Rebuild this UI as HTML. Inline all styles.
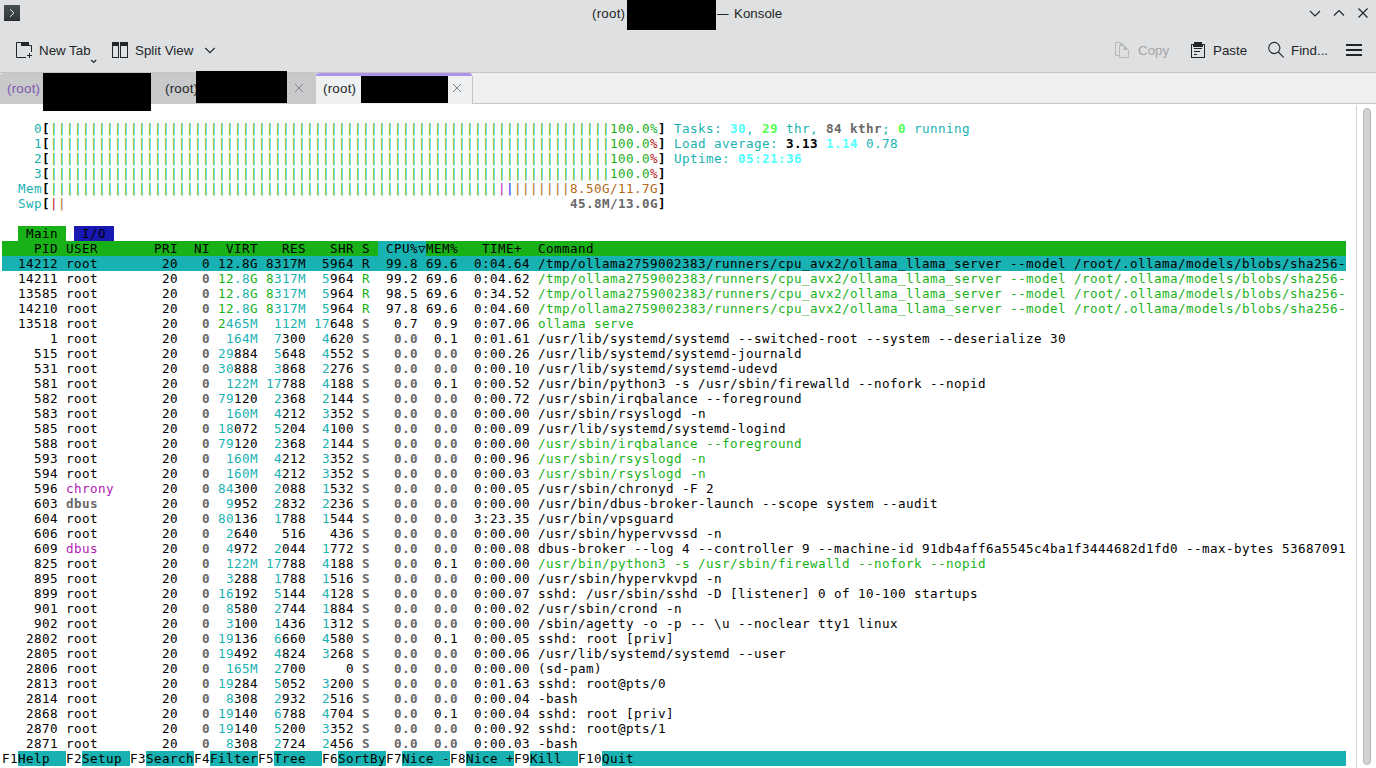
<!DOCTYPE html>
<html lang="en">
<head>
<meta charset="utf-8">
<title>(root) — Konsole</title>
<style>
html,body{margin:0;padding:0;}
body{width:1376px;height:768px;overflow:hidden;background:#fff;position:relative;
  font-family:"Liberation Sans","DejaVu Sans",sans-serif;font-size:13.33px;color:#232629;}
.abs{position:absolute;}
/* window chrome */
#head{left:0;top:0;width:1376px;height:72px;background:#dee0e2;}
#title{left:0;top:0;width:1376px;height:27px;}
.ui{position:absolute;white-space:pre;line-height:16px;height:16px;}
.rt{letter-spacing:0.24px;}
.red{position:absolute;background:#000;}
#tabs{left:0;top:72px;width:1376px;height:32px;background:#eff0f1;}
#tabs .line{left:0;top:0;width:1376px;height:1px;background:#c2c4c6;}
#tabs .bline{left:0;top:31px;width:1376px;height:1px;background:#c5c7c9;}
.tab{position:absolute;top:1px;height:31px;background:#c8c9cb;}
.tab.act{background:#eff0f1;height:31px;}
/* terminal */
#term{left:2px;top:106px;width:1344px;height:660px;
  font-family:"DejaVu Sans Mono","Liberation Mono",monospace;font-size:12.6px;color:#000;}
#term .bg{position:absolute;height:15px;}
#term .txt{position:absolute;left:0;top:0;}
.ln{position:relative;height:15px;line-height:15px;white-space:pre;letter-spacing:0.4178px;}
.ln span{position:absolute;top:0;}
.c{color:#18b2b2}.g{color:#18b218}.r{color:#b21818}.y{color:#b26818}.m{color:#b218b2}
.B{color:#5454ff;font-weight:bold}
.s{color:#686868;font-weight:bold}.K{color:#000;font-weight:bold}
.C{color:#54ffff;font-weight:bold}.G{color:#54ff54;font-weight:bold}
/* scrollbar */
#sbline{left:1356px;top:105px;width:1px;height:663px;background:#d3d4d5;}
#sbh{left:1363px;top:108px;width:6px;height:655px;border:1px solid #b6b7b8;background:#d1d2d3;border-radius:4px;}
</style>
</head>
<body>
<div id="head" class="abs">
  <!-- konsole app icon -->
  <svg class="abs" style="left:4px;top:5px" width="16" height="16" viewBox="0 0 16 16">
    <defs><linearGradient id="kg" x1="0" y1="0" x2="0" y2="1"><stop offset="0" stop-color="#464e50"/><stop offset="1" stop-color="#30373a"/></linearGradient></defs>
    <rect x="0" y="0" width="16" height="16" rx="0.6" fill="url(#kg)"/><rect x="0" y="15" width="16" height="1" fill="#252a2d"/>
    <path d="M6 4.2 L9.9 8 L6 11.8" fill="none" stroke="#eef0f0" stroke-width="1"/>
  </svg>
  <div class="ui rt" id="t1" style="left:592px;top:6px;">(root)</div>
  <div class="red" style="left:627px;top:0;width:89px;height:30px;"></div>
  <div class="ui" id="t2" style="left:717px;top:6px;"><span style="display:inline-block;width:17px;"><span style="display:inline-block;transform:scaleX(0.86);transform-origin:0 50%;">—</span></span>Konsole</div>
  <!-- window buttons -->
  <svg class="abs" style="left:1304px;top:4px" width="68" height="18" viewBox="0 0 68 18">
    <g fill="none" stroke="#232629" stroke-width="1.15">
      <path d="M6 7 L11 12 L16 7"/>
      <path d="M30 11.5 L35 6.5 L40 11.5"/>
      <path d="M54.5 4.5 L63.5 13.5 M63.5 4.5 L54.5 13.5"/>
    </g>
  </svg>
  <!-- toolbar: New Tab -->
  <svg class="abs" style="left:16px;top:42px" width="16" height="16" viewBox="0 0 16 16">
    <path d="M5 0.5 H0.5 V15.5 H10 M13 3.5 H15.5 V10" fill="none" stroke="#232629" stroke-width="1" stroke-linejoin="miter"/>
    <rect x="5" y="0" width="8" height="4" fill="#232629"/>
    <path d="M13.5 11 V16 M11 13.5 H16" fill="none" stroke="#232629" stroke-width="1"/>
  </svg>
  <div class="ui" id="b1" style="left:39px;top:43px;">New Tab</div>
  <svg class="abs" style="left:90px;top:59px" width="8" height="5" viewBox="0 0 8 5"><path d="M1.2 1 L3.7 3.5 L6.2 1" fill="none" stroke="#232629" stroke-width="1.2"/></svg>
  <!-- Split View -->
  <svg class="abs" style="left:112px;top:42px" width="16" height="16" viewBox="0 0 16 16">
    <rect x="0" y="0" width="7" height="4" fill="#232629"/><rect x="8" y="0" width="8" height="4" fill="#232629"/>
    <rect x="0.5" y="0.5" width="6" height="15" fill="none" stroke="#232629"/>
    <rect x="8.5" y="0.5" width="7" height="15" fill="none" stroke="#232629"/>
  </svg>
  <div class="ui" id="b2" style="left:135px;top:43px;">Split View</div>
  <svg class="abs" style="left:204px;top:46px" width="12" height="9" viewBox="0 0 12 9"><path d="M1.3 2 L6 6.7 L10.7 2" fill="none" stroke="#232629" stroke-width="1.1"/></svg>
  <!-- Copy (disabled) -->
  <svg class="abs" style="left:1115px;top:42px" width="14" height="16" viewBox="0 0 14 16">
    <g fill="none" stroke="#b5b7b9" stroke-width="1">
      <path d="M4.5 13.5 H0.5 V0.5 H5.5"/>
      <path d="M9 3.5 H4.5 V15.5 H13.5 V8"/>
    </g>
    <path d="M5.3 0 L9 3.7 L9 3 H5.3 Z M8.7 3 L14 8.3 V8 H8.7 Z" fill="#b5b7b9"/>
    <path d="M5.5 0 L8.8 3.3 H5.5 Z" fill="#b5b7b9"/>
    <path d="M9 3.2 L13.8 8 H9 Z" fill="#b5b7b9"/>
  </svg>
  <div class="ui" id="b3" style="left:1138px;top:43px;color:#a3a5a7;">Copy</div>
  <!-- Paste -->
  <svg class="abs" style="left:1191px;top:42px" width="14" height="16" viewBox="0 0 14 16">
    <rect x="0.5" y="2.5" width="13" height="13" fill="none" stroke="#232629"/>
    <rect x="3" y="0" width="8" height="3" fill="#232629"/><rect x="2" y="2" width="10" height="3" fill="#232629"/>
    <path d="M3 6.5 H11 M3 9.5 H9 M3 12.5 H6" stroke="#232629" stroke-width="1" fill="none"/>
  </svg>
  <div class="ui" id="b4" style="left:1213px;top:43px;">Paste</div>
  <!-- Find -->
  <svg class="abs" style="left:1267px;top:41px" width="18" height="18" viewBox="0 0 18 18">
    <circle cx="7.3" cy="7" r="5.6" fill="none" stroke="#232629" stroke-width="1.1"/>
    <path d="M11.3 11 L16.6 16.4" stroke="#232629" stroke-width="1.1" fill="none"/>
  </svg>
  <div class="ui" id="b5" style="left:1291px;top:43px;">Find...</div>
  <!-- hamburger -->
  <div class="abs" style="left:1346px;top:44px;width:16px;height:2px;background:#232629"></div>
  <div class="abs" style="left:1346px;top:49px;width:16px;height:2px;background:#232629"></div>
  <div class="abs" style="left:1346px;top:54px;width:16px;height:2px;background:#232629"></div>
</div>
<div id="tabs" class="abs">
  <div class="abs line"></div><div class="abs bline"></div>
  <div class="tab" style="left:0;width:151px;"><div class="ui rt" id="g1" style="left:7px;top:8px;color:#7f55b0;">(root)</div></div>
  <div class="tab" style="left:151px;width:165px;"><div class="ui rt" id="g2" style="left:14px;top:8px;">(root)</div>
    <svg class="abs" style="left:143px;top:10px" width="10" height="10" viewBox="0 0 10 10"><path d="M1 1 L9 9 M9 1 L1 9" stroke="#7e8183" stroke-width="0.95" fill="none"/></svg></div>
  <div class="tab act" style="left:316px;width:156px;"><div class="abs" style="left:0;top:0;width:156px;height:6px;overflow:hidden"><div style="width:156px;height:12px;border-radius:3px;background:#ad94e8"></div></div>
    <div class="abs" style="left:0;top:3px;width:156px;height:28px;background:#eff0f1"></div>
    <div class="ui rt" id="g3" style="left:7px;top:8px;">(root)</div>
    <svg class="abs" style="left:136px;top:10px" width="10" height="10" viewBox="0 0 10 10"><path d="M1 1 L9 9 M9 1 L1 9" stroke="#75787a" stroke-width="0.95" fill="none"/></svg></div>
  <div class="abs" style="left:472px;top:4px;width:1px;height:27px;background:#c3c5c6"></div>
  <svg class="abs" style="left:0;top:0" width="4" height="4" viewBox="0 0 4 4"><path d="M0 1 L3.2 1 L0 2.6 Z" fill="#eceded"/></svg>
</div>
<div class="red" style="left:43px;top:73px;width:108px;height:38px;"></div>
<div class="red" style="left:196px;top:71px;width:91px;height:32px;"></div>
<div class="red" style="left:361px;top:76px;width:87px;height:27px;"></div>
<div id="term" class="abs">
<div class="bg" style="left:0px;top:135px;width:1344px;background:#18b218"></div>
<div class="bg" style="left:0px;top:150px;width:1344px;background:#18b2b2"></div>
<div class="bg" style="left:600px;top:645px;width:744px;background:#18b2b2"></div>
<div class="bg" style="left:16px;top:120px;width:48px;background:#18b218"></div>
<div class="bg" style="left:376px;top:135px;width:48px;background:#18b2b2"></div>
<div class="bg" style="left:16px;top:645px;width:48px;background:#18b2b2"></div>
<div class="bg" style="left:80px;top:645px;width:48px;background:#18b2b2"></div>
<div class="bg" style="left:144px;top:645px;width:48px;background:#18b2b2"></div>
<div class="bg" style="left:208px;top:645px;width:48px;background:#18b2b2"></div>
<div class="bg" style="left:272px;top:645px;width:48px;background:#18b2b2"></div>
<div class="bg" style="left:336px;top:645px;width:48px;background:#18b2b2"></div>
<div class="bg" style="left:400px;top:645px;width:48px;background:#18b2b2"></div>
<div class="bg" style="left:464px;top:645px;width:48px;background:#18b2b2"></div>
<div class="bg" style="left:528px;top:645px;width:48px;background:#18b2b2"></div>
<div class="bg" style="left:72px;top:120px;width:40px;background:#1818b2"></div>
<div class="txt">
<div class="ln"></div>
<div class="ln"><span class="c" style="left:32px">0</span><span class="K" style="left:40px">[</span><span class="g" style="left:48px">||||||||||</span><span class="g" style="left:128px">||||||||||</span><span class="g" style="left:208px">||||||||||</span><span class="g" style="left:288px">||||||||||</span><span class="g" style="left:368px">||||||||||</span><span class="g" style="left:448px">||||||||||</span><span class="g" style="left:528px">||||||||||</span><span class="g" style="left:608px">100.0%</span><span class="K" style="left:656px">] </span><span class="c" style="left:672px">Tasks: </span><span class="C" style="left:728px">30</span><span class="c" style="left:744px">, </span><span class="G" style="left:760px">29 </span><span class="c" style="left:784px">thr, </span><span class="s" style="left:824px">84 </span><span class="s" style="left:848px">kthr</span><span class="c" style="left:880px">; </span><span class="G" style="left:896px">0 </span><span class="c" style="left:912px">running</span></div>
<div class="ln"><span class="c" style="left:32px">1</span><span class="K" style="left:40px">[</span><span class="g" style="left:48px">||||||||||</span><span class="g" style="left:128px">||||||||||</span><span class="g" style="left:208px">||||||||||</span><span class="g" style="left:288px">||||||||||</span><span class="g" style="left:368px">||||||||||</span><span class="g" style="left:448px">||||||||||</span><span class="g" style="left:528px">||||||||||</span><span class="g" style="left:608px">100.0</span><span class="r" style="left:648px">%</span><span class="K" style="left:656px">] </span><span class="c" style="left:672px">Load </span><span class="c" style="left:712px">average: </span><span class="K" style="left:784px">3.13 </span><span class="C" style="left:824px">1.14 </span><span class="c" style="left:864px">0.78</span></div>
<div class="ln"><span class="c" style="left:32px">2</span><span class="K" style="left:40px">[</span><span class="g" style="left:48px">||||||||||</span><span class="g" style="left:128px">||||||||||</span><span class="g" style="left:208px">||||||||||</span><span class="g" style="left:288px">||||||||||</span><span class="g" style="left:368px">||||||||||</span><span class="g" style="left:448px">||||||||||</span><span class="g" style="left:528px">||||||||||</span><span class="g" style="left:608px">100.0</span><span class="r" style="left:648px">%</span><span class="K" style="left:656px">] </span><span class="c" style="left:672px">Uptime: </span><span class="C" style="left:736px">05:21:36</span></div>
<div class="ln"><span class="c" style="left:32px">3</span><span class="K" style="left:40px">[</span><span class="g" style="left:48px">||||||||||</span><span class="g" style="left:128px">||||||||||</span><span class="g" style="left:208px">||||||||||</span><span class="g" style="left:288px">||||||||||</span><span class="g" style="left:368px">||||||||||</span><span class="g" style="left:448px">||||||||||</span><span class="g" style="left:528px">||||||||||</span><span class="g" style="left:608px">100.0</span><span class="r" style="left:648px">%</span><span class="K" style="left:656px">]</span></div>
<div class="ln"><span class="c" style="left:16px">Mem</span><span class="K" style="left:40px">[</span><span class="g" style="left:48px">||||||||||</span><span class="g" style="left:128px">||||||||||</span><span class="g" style="left:208px">||||||||||</span><span class="g" style="left:288px">||||||||||</span><span class="g" style="left:368px">||||||||||</span><span class="g" style="left:448px">||||||</span><span class="m" style="left:496px">|</span><span class="B" style="left:504px">|</span><span class="y" style="left:512px">|||||||</span><span class="y" style="left:568px">8.50G/11.7G</span><span class="K" style="left:656px">]</span></div>
<div class="ln"><span class="c" style="left:16px">Swp</span><span class="K" style="left:40px">[</span><span class="r" style="left:48px">|</span><span class="y" style="left:56px">|                                                               </span><span class="s" style="left:568px">45.8M/13.0G</span><span class="K" style="left:656px">]</span></div>
<div class="ln"></div>
<div class="ln"><span style="left:24px">Main   </span><span style="left:80px">I/O</span></div>
<div class="ln"><span style="left:32px">PID </span><span style="left:64px">USER       </span><span style="left:152px">PRI  </span><span style="left:192px">NI  </span><span style="left:224px">VIRT   </span><span style="left:280px">RES   </span><span style="left:328px">SHR </span><span style="left:360px">S  </span><span style="left:384px">CPU%▽MEM%   </span><span style="left:480px">TIME+  </span><span style="left:536px">Command</span></div>
<div class="ln"><span style="left:16px">14212 </span><span style="left:64px">root        </span><span style="left:160px">20   </span><span style="left:200px">0 </span><span style="left:216px">12.8G </span><span style="left:264px">8317M  </span><span style="left:320px">5964 </span><span style="left:360px">R  </span><span style="left:384px">99.8 </span><span style="left:424px">69.6  </span><span style="left:472px">0:04.64 </span><span style="left:536px">/tmp/ollama2759002383/runners/cpu_avx2/ollama_llama_server </span><span style="left:1008px">--model </span><span style="left:1072px">/root/.ollama/models/blobs/sha256-</span></div>
<div class="ln"><span style="left:16px">14211 </span><span style="left:64px">root        </span><span style="left:160px">20   </span><span class="s" style="left:200px">0 </span><span class="g" style="left:216px">12</span><span class="c" style="left:232px">.8</span><span class="g" style="left:248px">G </span><span class="g" style="left:264px">8</span><span class="c" style="left:272px">317M  </span><span class="c" style="left:320px">5</span><span style="left:328px">964 </span><span class="g" style="left:360px">R  </span><span style="left:384px">99.2 </span><span style="left:424px">69.6  </span><span style="left:472px">0:04.62 </span><span class="g" style="left:536px">/tmp/ollama2759002383/runners/cpu_avx2/ollama_llama_server </span><span class="g" style="left:1008px">--model </span><span class="g" style="left:1072px">/root/.ollama/models/blobs/sha256-</span></div>
<div class="ln"><span style="left:16px">13585 </span><span style="left:64px">root        </span><span style="left:160px">20   </span><span class="s" style="left:200px">0 </span><span class="g" style="left:216px">12</span><span class="c" style="left:232px">.8</span><span class="g" style="left:248px">G </span><span class="g" style="left:264px">8</span><span class="c" style="left:272px">317M  </span><span class="c" style="left:320px">5</span><span style="left:328px">964 </span><span class="g" style="left:360px">R  </span><span style="left:384px">98.5 </span><span style="left:424px">69.6  </span><span style="left:472px">0:34.52 </span><span class="g" style="left:536px">/tmp/ollama2759002383/runners/cpu_avx2/ollama_llama_server </span><span class="g" style="left:1008px">--model </span><span class="g" style="left:1072px">/root/.ollama/models/blobs/sha256-</span></div>
<div class="ln"><span style="left:16px">14210 </span><span style="left:64px">root        </span><span style="left:160px">20   </span><span class="s" style="left:200px">0 </span><span class="g" style="left:216px">12</span><span class="c" style="left:232px">.8</span><span class="g" style="left:248px">G </span><span class="g" style="left:264px">8</span><span class="c" style="left:272px">317M  </span><span class="c" style="left:320px">5</span><span style="left:328px">964 </span><span class="g" style="left:360px">R  </span><span style="left:384px">97.8 </span><span style="left:424px">69.6  </span><span style="left:472px">0:04.60 </span><span class="g" style="left:536px">/tmp/ollama2759002383/runners/cpu_avx2/ollama_llama_server </span><span class="g" style="left:1008px">--model </span><span class="g" style="left:1072px">/root/.ollama/models/blobs/sha256-</span></div>
<div class="ln"><span style="left:16px">13518 </span><span style="left:64px">root        </span><span style="left:160px">20   </span><span class="s" style="left:200px">0 </span><span class="g" style="left:216px">2</span><span class="c" style="left:224px">465M  </span><span class="c" style="left:272px">112M </span><span class="c" style="left:312px">17</span><span style="left:328px">648 </span><span class="s" style="left:360px">S   </span><span style="left:392px">0.7  </span><span style="left:432px">0.9  </span><span style="left:472px">0:07.06 </span><span class="g" style="left:536px">ollama </span><span class="g" style="left:592px">serve</span></div>
<div class="ln"><span style="left:48px">1 </span><span style="left:64px">root        </span><span style="left:160px">20   </span><span class="s" style="left:200px">0  </span><span class="c" style="left:224px">164M  </span><span class="c" style="left:272px">7</span><span style="left:280px">300  </span><span class="c" style="left:320px">4</span><span style="left:328px">620 </span><span class="s" style="left:360px">S   </span><span class="s" style="left:392px">0.0  </span><span style="left:432px">0.1  </span><span style="left:472px">0:01.61 </span><span style="left:536px">/usr/lib/systemd/systemd </span><span style="left:736px">--switched-root </span><span style="left:864px">--system </span><span style="left:936px">--deserialize </span><span style="left:1048px">30</span></div>
<div class="ln"><span style="left:32px">515 </span><span style="left:64px">root        </span><span style="left:160px">20   </span><span class="s" style="left:200px">0 </span><span class="c" style="left:216px">29</span><span style="left:232px">884  </span><span class="c" style="left:272px">5</span><span style="left:280px">648  </span><span class="c" style="left:320px">4</span><span style="left:328px">552 </span><span class="s" style="left:360px">S   </span><span class="s" style="left:392px">0.0  </span><span class="s" style="left:432px">0.0  </span><span style="left:472px">0:00.26 </span><span style="left:536px">/usr/lib/systemd/systemd-journald</span></div>
<div class="ln"><span style="left:32px">531 </span><span style="left:64px">root        </span><span style="left:160px">20   </span><span class="s" style="left:200px">0 </span><span class="c" style="left:216px">30</span><span style="left:232px">888  </span><span class="c" style="left:272px">3</span><span style="left:280px">868  </span><span class="c" style="left:320px">2</span><span style="left:328px">276 </span><span class="s" style="left:360px">S   </span><span class="s" style="left:392px">0.0  </span><span class="s" style="left:432px">0.0  </span><span style="left:472px">0:00.10 </span><span style="left:536px">/usr/lib/systemd/systemd-udevd</span></div>
<div class="ln"><span style="left:32px">581 </span><span style="left:64px">root        </span><span style="left:160px">20   </span><span class="s" style="left:200px">0  </span><span class="c" style="left:224px">122M </span><span class="c" style="left:264px">17</span><span style="left:280px">788  </span><span class="c" style="left:320px">4</span><span style="left:328px">188 </span><span class="s" style="left:360px">S   </span><span class="s" style="left:392px">0.0  </span><span style="left:432px">0.1  </span><span style="left:472px">0:00.52 </span><span style="left:536px">/usr/bin/python3 </span><span style="left:672px">-s </span><span style="left:696px">/usr/sbin/firewalld </span><span style="left:856px">--nofork </span><span style="left:928px">--nopid</span></div>
<div class="ln"><span style="left:32px">582 </span><span style="left:64px">root        </span><span style="left:160px">20   </span><span class="s" style="left:200px">0 </span><span class="c" style="left:216px">79</span><span style="left:232px">120  </span><span class="c" style="left:272px">2</span><span style="left:280px">368  </span><span class="c" style="left:320px">2</span><span style="left:328px">144 </span><span class="s" style="left:360px">S   </span><span class="s" style="left:392px">0.0  </span><span class="s" style="left:432px">0.0  </span><span style="left:472px">0:00.72 </span><span style="left:536px">/usr/sbin/irqbalance </span><span style="left:704px">--foreground</span></div>
<div class="ln"><span style="left:32px">583 </span><span style="left:64px">root        </span><span style="left:160px">20   </span><span class="s" style="left:200px">0  </span><span class="c" style="left:224px">160M  </span><span class="c" style="left:272px">4</span><span style="left:280px">212  </span><span class="c" style="left:320px">3</span><span style="left:328px">352 </span><span class="s" style="left:360px">S   </span><span class="s" style="left:392px">0.0  </span><span class="s" style="left:432px">0.0  </span><span style="left:472px">0:00.00 </span><span style="left:536px">/usr/sbin/rsyslogd </span><span style="left:688px">-n</span></div>
<div class="ln"><span style="left:32px">585 </span><span style="left:64px">root        </span><span style="left:160px">20   </span><span class="s" style="left:200px">0 </span><span class="c" style="left:216px">18</span><span style="left:232px">072  </span><span class="c" style="left:272px">5</span><span style="left:280px">204  </span><span class="c" style="left:320px">4</span><span style="left:328px">100 </span><span class="s" style="left:360px">S   </span><span class="s" style="left:392px">0.0  </span><span class="s" style="left:432px">0.0  </span><span style="left:472px">0:00.09 </span><span style="left:536px">/usr/lib/systemd/systemd-logind</span></div>
<div class="ln"><span style="left:32px">588 </span><span style="left:64px">root        </span><span style="left:160px">20   </span><span class="s" style="left:200px">0 </span><span class="c" style="left:216px">79</span><span style="left:232px">120  </span><span class="c" style="left:272px">2</span><span style="left:280px">368  </span><span class="c" style="left:320px">2</span><span style="left:328px">144 </span><span class="s" style="left:360px">S   </span><span class="s" style="left:392px">0.0  </span><span class="s" style="left:432px">0.0  </span><span style="left:472px">0:00.00 </span><span class="g" style="left:536px">/usr/sbin/irqbalance </span><span class="g" style="left:704px">--foreground</span></div>
<div class="ln"><span style="left:32px">593 </span><span style="left:64px">root        </span><span style="left:160px">20   </span><span class="s" style="left:200px">0  </span><span class="c" style="left:224px">160M  </span><span class="c" style="left:272px">4</span><span style="left:280px">212  </span><span class="c" style="left:320px">3</span><span style="left:328px">352 </span><span class="s" style="left:360px">S   </span><span class="s" style="left:392px">0.0  </span><span class="s" style="left:432px">0.0  </span><span style="left:472px">0:00.96 </span><span class="g" style="left:536px">/usr/sbin/rsyslogd </span><span class="g" style="left:688px">-n</span></div>
<div class="ln"><span style="left:32px">594 </span><span style="left:64px">root        </span><span style="left:160px">20   </span><span class="s" style="left:200px">0  </span><span class="c" style="left:224px">160M  </span><span class="c" style="left:272px">4</span><span style="left:280px">212  </span><span class="c" style="left:320px">3</span><span style="left:328px">352 </span><span class="s" style="left:360px">S   </span><span class="s" style="left:392px">0.0  </span><span class="s" style="left:432px">0.0  </span><span style="left:472px">0:00.03 </span><span class="g" style="left:536px">/usr/sbin/rsyslogd </span><span class="g" style="left:688px">-n</span></div>
<div class="ln"><span style="left:32px">596 </span><span class="m" style="left:64px">chrony      </span><span style="left:160px">20   </span><span class="s" style="left:200px">0 </span><span class="c" style="left:216px">84</span><span style="left:232px">300  </span><span class="c" style="left:272px">2</span><span style="left:280px">088  </span><span class="c" style="left:320px">1</span><span style="left:328px">532 </span><span class="s" style="left:360px">S   </span><span class="s" style="left:392px">0.0  </span><span class="s" style="left:432px">0.0  </span><span style="left:472px">0:00.05 </span><span style="left:536px">/usr/sbin/chronyd </span><span style="left:680px">-F </span><span style="left:704px">2</span></div>
<div class="ln"><span style="left:32px">603 </span><span class="s" style="left:64px">dbus        </span><span style="left:160px">20   </span><span class="s" style="left:200px">0  </span><span class="c" style="left:224px">9</span><span style="left:232px">952  </span><span class="c" style="left:272px">2</span><span style="left:280px">832  </span><span class="c" style="left:320px">2</span><span style="left:328px">236 </span><span class="s" style="left:360px">S   </span><span class="s" style="left:392px">0.0  </span><span class="s" style="left:432px">0.0  </span><span style="left:472px">0:00.00 </span><span style="left:536px">/usr/bin/dbus-broker-launch </span><span style="left:760px">--scope </span><span style="left:824px">system </span><span style="left:880px">--audit</span></div>
<div class="ln"><span style="left:32px">604 </span><span style="left:64px">root        </span><span style="left:160px">20   </span><span class="s" style="left:200px">0 </span><span class="c" style="left:216px">80</span><span style="left:232px">136  </span><span class="c" style="left:272px">1</span><span style="left:280px">788  </span><span class="c" style="left:320px">1</span><span style="left:328px">544 </span><span class="s" style="left:360px">S   </span><span class="s" style="left:392px">0.0  </span><span class="s" style="left:432px">0.0  </span><span style="left:472px">3:23.35 </span><span style="left:536px">/usr/bin/vpsguard</span></div>
<div class="ln"><span style="left:32px">606 </span><span style="left:64px">root        </span><span style="left:160px">20   </span><span class="s" style="left:200px">0  </span><span class="c" style="left:224px">2</span><span style="left:232px">640   </span><span style="left:280px">516   </span><span style="left:328px">436 </span><span class="s" style="left:360px">S   </span><span class="s" style="left:392px">0.0  </span><span class="s" style="left:432px">0.0  </span><span style="left:472px">0:00.00 </span><span style="left:536px">/usr/sbin/hypervvssd </span><span style="left:704px">-n</span></div>
<div class="ln"><span style="left:32px">609 </span><span class="m" style="left:64px">dbus        </span><span style="left:160px">20   </span><span class="s" style="left:200px">0  </span><span class="c" style="left:224px">4</span><span style="left:232px">972  </span><span class="c" style="left:272px">2</span><span style="left:280px">044  </span><span class="c" style="left:320px">1</span><span style="left:328px">772 </span><span class="s" style="left:360px">S   </span><span class="s" style="left:392px">0.0  </span><span class="s" style="left:432px">0.0  </span><span style="left:472px">0:00.08 </span><span style="left:536px">dbus-broker </span><span style="left:632px">--log </span><span style="left:680px">4 </span><span style="left:696px">--controller </span><span style="left:800px">9 </span><span style="left:816px">--machine-id </span><span style="left:920px">91db4aff6a5545c4ba1f3444682d1fd0 </span><span style="left:1184px">--max-bytes </span><span style="left:1280px">53687091</span></div>
<div class="ln"><span style="left:32px">825 </span><span style="left:64px">root        </span><span style="left:160px">20   </span><span class="s" style="left:200px">0  </span><span class="c" style="left:224px">122M </span><span class="c" style="left:264px">17</span><span style="left:280px">788  </span><span class="c" style="left:320px">4</span><span style="left:328px">188 </span><span class="s" style="left:360px">S   </span><span class="s" style="left:392px">0.0  </span><span style="left:432px">0.1  </span><span style="left:472px">0:00.00 </span><span class="g" style="left:536px">/usr/bin/python3 </span><span class="g" style="left:672px">-s </span><span class="g" style="left:696px">/usr/sbin/firewalld </span><span class="g" style="left:856px">--nofork </span><span class="g" style="left:928px">--nopid</span></div>
<div class="ln"><span style="left:32px">895 </span><span style="left:64px">root        </span><span style="left:160px">20   </span><span class="s" style="left:200px">0  </span><span class="c" style="left:224px">3</span><span style="left:232px">288  </span><span class="c" style="left:272px">1</span><span style="left:280px">788  </span><span class="c" style="left:320px">1</span><span style="left:328px">516 </span><span class="s" style="left:360px">S   </span><span class="s" style="left:392px">0.0  </span><span class="s" style="left:432px">0.0  </span><span style="left:472px">0:00.00 </span><span style="left:536px">/usr/sbin/hypervkvpd </span><span style="left:704px">-n</span></div>
<div class="ln"><span style="left:32px">899 </span><span style="left:64px">root        </span><span style="left:160px">20   </span><span class="s" style="left:200px">0 </span><span class="c" style="left:216px">16</span><span style="left:232px">192  </span><span class="c" style="left:272px">5</span><span style="left:280px">144  </span><span class="c" style="left:320px">4</span><span style="left:328px">128 </span><span class="s" style="left:360px">S   </span><span class="s" style="left:392px">0.0  </span><span class="s" style="left:432px">0.0  </span><span style="left:472px">0:00.07 </span><span style="left:536px">sshd: </span><span style="left:584px">/usr/sbin/sshd </span><span style="left:704px">-D </span><span style="left:728px">[listener] </span><span style="left:816px">0 </span><span style="left:832px">of </span><span style="left:856px">10-100 </span><span style="left:912px">startups</span></div>
<div class="ln"><span style="left:32px">901 </span><span style="left:64px">root        </span><span style="left:160px">20   </span><span class="s" style="left:200px">0  </span><span class="c" style="left:224px">8</span><span style="left:232px">580  </span><span class="c" style="left:272px">2</span><span style="left:280px">744  </span><span class="c" style="left:320px">1</span><span style="left:328px">884 </span><span class="s" style="left:360px">S   </span><span class="s" style="left:392px">0.0  </span><span class="s" style="left:432px">0.0  </span><span style="left:472px">0:00.02 </span><span style="left:536px">/usr/sbin/crond </span><span style="left:664px">-n</span></div>
<div class="ln"><span style="left:32px">902 </span><span style="left:64px">root        </span><span style="left:160px">20   </span><span class="s" style="left:200px">0  </span><span class="c" style="left:224px">3</span><span style="left:232px">100  </span><span class="c" style="left:272px">1</span><span style="left:280px">436  </span><span class="c" style="left:320px">1</span><span style="left:328px">312 </span><span class="s" style="left:360px">S   </span><span class="s" style="left:392px">0.0  </span><span class="s" style="left:432px">0.0  </span><span style="left:472px">0:00.00 </span><span style="left:536px">/sbin/agetty </span><span style="left:640px">-o </span><span style="left:664px">-p </span><span style="left:688px">-- </span><span style="left:712px">\u </span><span style="left:736px">--noclear </span><span style="left:816px">tty1 </span><span style="left:856px">linux</span></div>
<div class="ln"><span style="left:24px">2802 </span><span style="left:64px">root        </span><span style="left:160px">20   </span><span class="s" style="left:200px">0 </span><span class="c" style="left:216px">19</span><span style="left:232px">136  </span><span class="c" style="left:272px">6</span><span style="left:280px">660  </span><span class="c" style="left:320px">4</span><span style="left:328px">580 </span><span class="s" style="left:360px">S   </span><span class="s" style="left:392px">0.0  </span><span style="left:432px">0.1  </span><span style="left:472px">0:00.05 </span><span style="left:536px">sshd: </span><span style="left:584px">root </span><span style="left:624px">[priv]</span></div>
<div class="ln"><span style="left:24px">2805 </span><span style="left:64px">root        </span><span style="left:160px">20   </span><span class="s" style="left:200px">0 </span><span class="c" style="left:216px">19</span><span style="left:232px">492  </span><span class="c" style="left:272px">4</span><span style="left:280px">824  </span><span class="c" style="left:320px">3</span><span style="left:328px">268 </span><span class="s" style="left:360px">S   </span><span class="s" style="left:392px">0.0  </span><span class="s" style="left:432px">0.0  </span><span style="left:472px">0:00.06 </span><span style="left:536px">/usr/lib/systemd/systemd </span><span style="left:736px">--user</span></div>
<div class="ln"><span style="left:24px">2806 </span><span style="left:64px">root        </span><span style="left:160px">20   </span><span class="s" style="left:200px">0  </span><span class="c" style="left:224px">165M  </span><span class="c" style="left:272px">2</span><span style="left:280px">700     </span><span style="left:344px">0 </span><span class="s" style="left:360px">S   </span><span class="s" style="left:392px">0.0  </span><span class="s" style="left:432px">0.0  </span><span style="left:472px">0:00.00 </span><span style="left:536px">(sd-pam)</span></div>
<div class="ln"><span style="left:24px">2813 </span><span style="left:64px">root        </span><span style="left:160px">20   </span><span class="s" style="left:200px">0 </span><span class="c" style="left:216px">19</span><span style="left:232px">284  </span><span class="c" style="left:272px">5</span><span style="left:280px">052  </span><span class="c" style="left:320px">3</span><span style="left:328px">200 </span><span class="s" style="left:360px">S   </span><span class="s" style="left:392px">0.0  </span><span class="s" style="left:432px">0.0  </span><span style="left:472px">0:01.63 </span><span style="left:536px">sshd: </span><span style="left:584px">root@pts/0</span></div>
<div class="ln"><span style="left:24px">2814 </span><span style="left:64px">root        </span><span style="left:160px">20   </span><span class="s" style="left:200px">0  </span><span class="c" style="left:224px">8</span><span style="left:232px">308  </span><span class="c" style="left:272px">2</span><span style="left:280px">932  </span><span class="c" style="left:320px">2</span><span style="left:328px">516 </span><span class="s" style="left:360px">S   </span><span class="s" style="left:392px">0.0  </span><span class="s" style="left:432px">0.0  </span><span style="left:472px">0:00.04 </span><span style="left:536px">-bash</span></div>
<div class="ln"><span style="left:24px">2868 </span><span style="left:64px">root        </span><span style="left:160px">20   </span><span class="s" style="left:200px">0 </span><span class="c" style="left:216px">19</span><span style="left:232px">140  </span><span class="c" style="left:272px">6</span><span style="left:280px">788  </span><span class="c" style="left:320px">4</span><span style="left:328px">704 </span><span class="s" style="left:360px">S   </span><span class="s" style="left:392px">0.0  </span><span style="left:432px">0.1  </span><span style="left:472px">0:00.04 </span><span style="left:536px">sshd: </span><span style="left:584px">root </span><span style="left:624px">[priv]</span></div>
<div class="ln"><span style="left:24px">2870 </span><span style="left:64px">root        </span><span style="left:160px">20   </span><span class="s" style="left:200px">0 </span><span class="c" style="left:216px">19</span><span style="left:232px">140  </span><span class="c" style="left:272px">5</span><span style="left:280px">200  </span><span class="c" style="left:320px">3</span><span style="left:328px">352 </span><span class="s" style="left:360px">S   </span><span class="s" style="left:392px">0.0  </span><span class="s" style="left:432px">0.0  </span><span style="left:472px">0:00.92 </span><span style="left:536px">sshd: </span><span style="left:584px">root@pts/1</span></div>
<div class="ln"><span style="left:24px">2871 </span><span style="left:64px">root        </span><span style="left:160px">20   </span><span class="s" style="left:200px">0  </span><span class="c" style="left:224px">8</span><span style="left:232px">308  </span><span class="c" style="left:272px">2</span><span style="left:280px">724  </span><span class="c" style="left:320px">2</span><span style="left:328px">456 </span><span class="s" style="left:360px">S   </span><span class="s" style="left:392px">0.0  </span><span class="s" style="left:432px">0.0  </span><span style="left:472px">0:00.03 </span><span style="left:536px">-bash</span></div>
<div class="ln"><span style="left:0px">F1Help  </span><span style="left:64px">F2Setup </span><span style="left:128px">F3SearchF4FilterF5Tree  </span><span style="left:320px">F6SortByF7Nice </span><span style="left:440px">-F8Nice </span><span style="left:504px">+F9Kill  </span><span style="left:576px">F10Quit</span></div>
</div>
</div>
<div id="sbline" class="abs"></div>
<div id="sbh" class="abs"></div>
</body>
</html>
